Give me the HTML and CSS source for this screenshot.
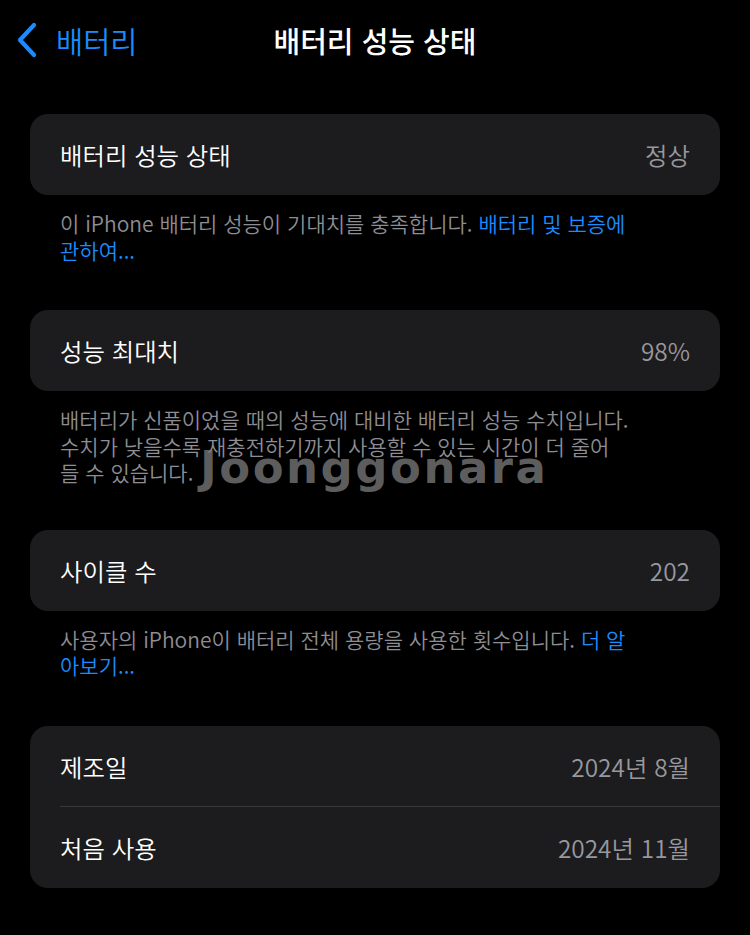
FILE: index.html
```html
<!DOCTYPE html>
<html lang="ko">
<head>
<meta charset="utf-8">
<title>배터리 성능 상태</title>
<link rel="stylesheet" href="styles.css">
</head>
<body>
<div class="screen">
  <header class="nav">
    <a class="back" href="#">
      <svg class="chev" viewBox="0 0 22 36" width="22" height="36" aria-hidden="true"><path d="M18 3 L4 18 L18 33" fill="none" stroke="#1a8cff" stroke-width="4.2" stroke-linecap="round" stroke-linejoin="round"/></svg>
      <span class="back-label">배터리</span>
    </a>
    <h1 class="title">배터리 성능 상태</h1>
  </header>

  <main class="content">
    <section class="group">
      <div class="card">
        <div class="row"><span class="label">배터리 성능 상태</span><span class="value">정상</span></div>
      </div>
      <p class="footer">이 iPhone 배터리 성능이 기대치를 충족합니다. <a class="link" href="#">배터리 및 보증에<br>관하여...</a></p>
    </section>

    <section class="group">
      <div class="card">
        <div class="row"><span class="label">성능 최대치</span><span class="value">98%</span></div>
      </div>
      <p class="footer">배터리가 신품이었을 때의 성능에 대비한 배터리 성능 수치입니다.<br>수치가 낮을수록 재충전하기까지 사용할 수 있는 시간이 더 줄어<br>들 수 있습니다.</p>
    </section>

    <section class="group">
      <div class="card">
        <div class="row"><span class="label">사이클 수</span><span class="value">202</span></div>
      </div>
      <p class="footer">사용자의 iPhone이 배터리 전체 용량을 사용한 횟수입니다. <a class="link" href="#">더 알<br>아보기...</a></p>
    </section>

    <section class="group">
      <div class="card">
        <div class="row"><span class="label">제조일</span><span class="value">2024년 8월</span></div>
        <div class="row divided"><span class="label">처음 사용</span><span class="value">2024년 11월</span></div>
      </div>
    </section>
  </main>

  <div class="watermark">Joonggonara</div>
</div>
</body>
</html>
```

FILE: styles.css
```css
* { box-sizing: border-box; }
html, body {
  margin: 0;
  padding: 0;
  background: #000;
}
body {
  font-family: "Noto Sans CJK KR", "Noto Sans", sans-serif;
  color: #fff;
}
.screen {
  position: relative;
  width: 750px;
  min-height: 935px;
  background: #000;
}
.nav {
  position: relative;
  height: 80px;
  display: flex;
  align-items: center;
  justify-content: center;
}
.back {
  position: absolute;
  left: 16px;
  top: 22px;
  display: flex;
  align-items: center;
  gap: 18px;
  text-decoration: none;
  color: #1a8cff;
}
.chev { display: block; }
.back-label {
  font-size: 29.5px;
  line-height: 36px;
  font-weight: 350;
}
.title {
  margin: 0;
  font-size: 29px;
  font-weight: 500;
  line-height: 36px;
}
.content {
  padding: 34px 30px 0 30px;
}
.group { margin-bottom: 47px; }
.group:nth-child(2) { margin-bottom: 44px; }
.card {
  background: #1c1c1e;
  border-radius: 18px;
  overflow: hidden;
}
.row {
  height: 81px;
  display: flex;
  align-items: center;
  justify-content: space-between;
  padding: 0 30px;
  position: relative;
}
.row.divided::before {
  content: "";
  position: absolute;
  left: 30px;
  right: 0;
  top: -1px;
  height: 1px;
  background: #38383a;
}
.label {
  font-size: 24.4px;
  font-weight: 350;
}
.value {
  font-size: 24.4px;
  font-weight: 350;
  color: #98989e;
}
.footer {
  margin: 0;
  padding: 15px 30px 0 30px;
  font-size: 21px;
  font-weight: 350;
  line-height: 26.5px;
  color: #8d8d93;
}
.link {
  color: #1a8cff;
  text-decoration: none;
}
.watermark {
  position: absolute;
  left: 200px;
  top: 445px;
  font-family: "DejaVu Sans", "Liberation Sans", sans-serif;
  font-weight: 700;
  font-size: 45px;
  line-height: 1;
  letter-spacing: 2.5px;
  color: rgba(120, 120, 120, 0.78);
  pointer-events: none;
}
```
